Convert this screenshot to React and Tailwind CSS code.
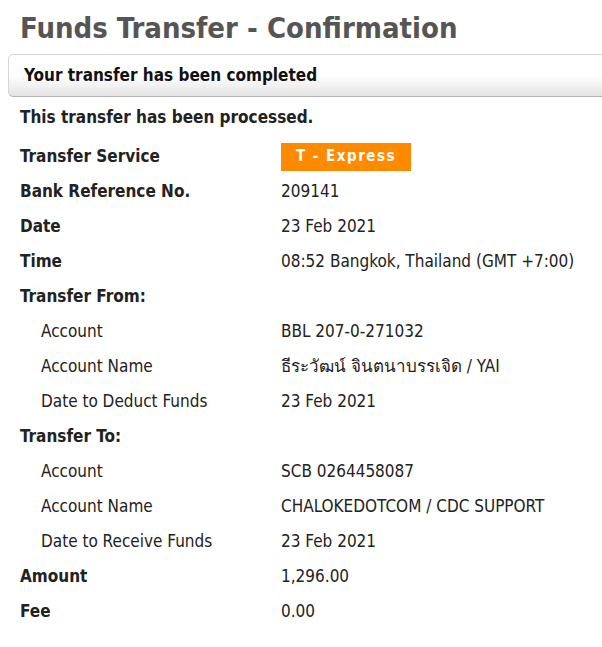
const rows = [
  { label: 'Bank Reference No.', value: '209141', bold: true },
  { label: 'Date', value: '23 Feb 2021', bold: true },
  { label: 'Time', value: '08:52 Bangkok, Thailand (GMT +7:00)', bold: true },
  { label: 'Transfer From:', value: '', bold: true },
  { label: 'Account', value: 'BBL 207-0-271032' },
  { label: 'Account Name', value: 'ธีระวัฒน์ จินตนาบรรเจิด / YAI' },
  { label: 'Date to Deduct Funds', value: '23 Feb 2021' },
  { label: 'Transfer To:', value: '', bold: true },
  { label: 'Account', value: 'SCB 0264458087' },
  { label: 'Account Name', value: 'CHALOKEDOTCOM / CDC SUPPORT' },
  { label: 'Date to Receive Funds', value: '23 Feb 2021' },
  { label: 'Amount', value: '1,296.00', bold: true },
  { label: 'Fee', value: '0.00', bold: true },
]

function Row({ label, value, bold }) {
  return (
    <div className="flex h-[35px] items-center">
      <div className={bold ? 'w-[281px] pl-5 font-bold' : 'w-[281px] pl-[41px]'}>{label}</div>
      <div>{value}</div>
    </div>
  )
}

export default function App() {
  return (
    <div
      className="h-[647px] w-[602px] overflow-hidden bg-white text-[17px] text-[#222]"
      style={{ fontFamily: '"DejaVu Sans Condensed", "DejaVu Sans", "Noto Sans", sans-serif' }}
    >
      <h1 className="pl-5 pt-[10px] text-[29px] leading-[36px] font-bold text-[#555]">
        Funds Transfer - Confirmation
      </h1>
      <div className="mt-[8px] ml-2 flex h-[43px] w-[620px] items-center rounded-[5px] border border-[#d6d6d6] border-b-[#b3b3b3] bg-gradient-to-b from-white via-white to-[#e4e4e4] pl-[15px] font-bold text-[#111]">
        Your transfer has been completed
      </div>
      <div className="mt-[3px] flex h-[35px] items-center pl-5 font-bold">This transfer has been processed.</div>
      <div className="mt-[4px]">
        <div className="flex h-[35px] items-center">
          <div className="w-[281px] pl-5 font-bold">Transfer Service</div>
          <div className="flex h-[28px] w-[130px] items-center justify-center bg-[#ff8a00] text-[15px] font-bold tracking-[1.5px] text-white">
            T - Express
          </div>
        </div>
        {rows.map((r, i) => (
          <Row key={i} {...r} />
        ))}
      </div>
    </div>
  )
}
